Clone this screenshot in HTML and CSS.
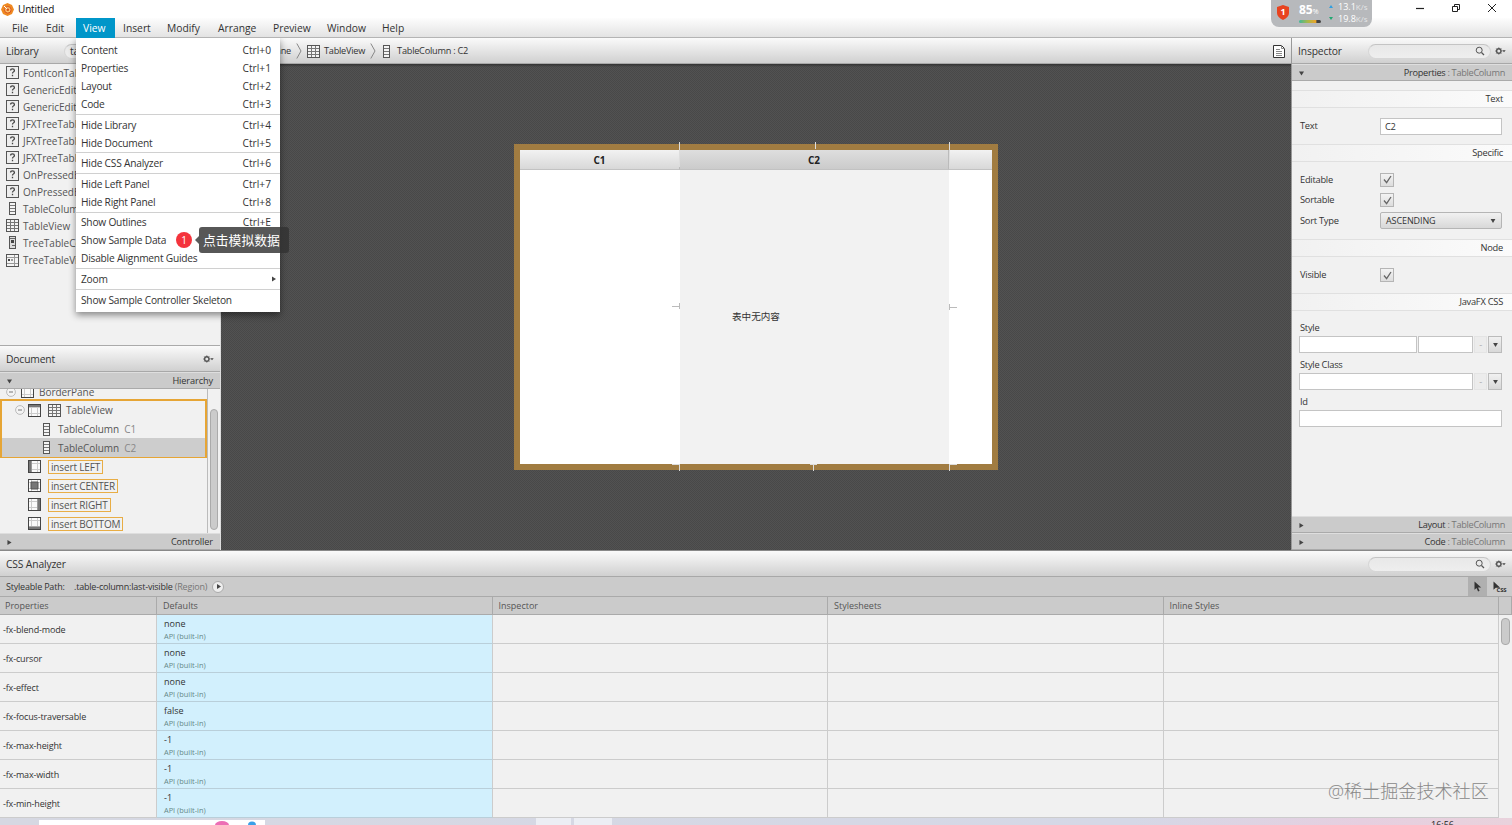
FILE: index.html
```
<!DOCTYPE html>
<html lang="en">
<head>
    <meta charset="UTF-8">
    <meta name="viewport" content="width=device-width, initial-scale=1.0">
    <title>Untitled</title>
    <link rel="stylesheet" href="styles.css">
</head>
<body>

    <!-- Icon set -->
    <svg class="sprite" width="0" height="0">
        <symbol id="i-unknown" viewBox="0 0 13 13"><rect x=".5" y=".5" width="12" height="12" fill="#eee" stroke="#555"/><path d="M4.6 4.6q0-1.7 1.9-1.7t1.9 1.6q0 1-1 1.5t-.9 1.5M6.5 8.8v1.4" fill="none" stroke="#444" stroke-width="1.3"/></symbol>
        <symbol id="i-table" viewBox="0 0 13 13"><rect x=".5" y=".5" width="12" height="12" fill="#f4f4f4" stroke="#555"/><path d="M1 3.5h11M1 6.5h11M1 9.5h11M4.5 1v11M8.5 1v11" stroke="#777" fill="none"/></symbol>
        <symbol id="i-treetable" viewBox="0 0 13 13"><rect x=".5" y=".5" width="12" height="12" fill="#f4f4f4" stroke="#555"/><path d="M1 3.5h11M8.5 1v11M1 9.5h11" stroke="#999" fill="none"/><path d="M2 5h2v2H2zM5 5.500h2v1H5z" fill="#444"/></symbol>
        <symbol id="i-column" viewBox="0 0 13 13"><rect x="3.5" y=".5" width="6" height="12" fill="#f4f4f4" stroke="#555"/><path d="M4 3.5h5M4 6.5h5M4 9.5h5" stroke="#777" fill="none"/></symbol>
        <symbol id="i-treecolumn" viewBox="0 0 13 13"><rect x="3.5" y=".5" width="6" height="12" fill="#ddd" stroke="#555"/><path d="M4 2.5h5M6 9.5h3" stroke="#666"/><path d="M5 4h3v3H5z" fill="#444"/></symbol>
        <symbol id="i-pane" viewBox="0 0 13 13"><rect x=".5" y=".5" width="12" height="12" fill="#fafafa" stroke="#444"/><path d="M3.5 1v11M9.5 1v11M1 3.5h11M1 9.5h11" stroke="#ccc"/></symbol>
        <symbol id="i-top" viewBox="0 0 13 13"><use href="#i-pane"/><path d="M1 1h11v2H1z" fill="#777"/></symbol>
        <symbol id="i-left" viewBox="0 0 13 13"><use href="#i-pane"/><path d="M1 1h2.6v11H1z" fill="#777"/></symbol>
        <symbol id="i-center" viewBox="0 0 13 13"><use href="#i-pane"/><path d="M3 3h7v7H3z" fill="#777" stroke="#555"/></symbol>
        <symbol id="i-right" viewBox="0 0 13 13"><use href="#i-pane"/><path d="M9.4 1H12v11H9.4z" fill="#777"/></symbol>
        <symbol id="i-bottom" viewBox="0 0 13 13"><use href="#i-pane"/><path d="M1 9.6h11V12H1z" fill="#777"/></symbol>
        <symbol id="i-search" viewBox="0 0 10 10"><circle cx="4.2" cy="4.2" r="3" fill="none" stroke="#555"/><path d="M6.5 6.5 9 9" stroke="#555" stroke-width="1.3"/></symbol>
        <symbol id="i-gear" viewBox="0 0 11 8"><circle cx="3.8" cy="4" r="2.2" fill="none" stroke="#555" stroke-width="1.4"/><path d="M3.8.5v1M3.8 6.5v1M.3 4h1M6.3 4h1M1.4 1.6l.7.7M5.5 5.7l.7.7M6.2 1.6l-.7.7M2.1 5.7l-.7.7" stroke="#555"/><path d="M7.3 3.2h3.4L9 5.2z" fill="#444"/></symbol>
        <symbol id="i-down" viewBox="0 0 6 5"><path d="M0 0h6L3 5z" fill="#444"/></symbol>
        <symbol id="i-play" viewBox="0 0 5 6"><path d="M0 0v6l5-3z" fill="#444"/></symbol>
        <symbol id="i-minus" viewBox="0 0 10 10"><circle cx="5" cy="5" r="4.4" fill="#f4f4f4" stroke="#bbb"/><path d="M3 5h4" stroke="#777"/></symbol>
        <symbol id="i-check" viewBox="0 0 9 9"><path d="M1 4.5 3.6 7.6 8 1" fill="none" stroke="#666" stroke-width="1.3"/></symbol>
        <symbol id="i-chevron" viewBox="0 0 6 16"><path d="M.8.5 5 8 .8 15.5" fill="none" stroke="#888"/></symbol>
    </svg>

    <!-- Window title -->
    <header class="titlebar">
        <svg class="logo" viewBox="0 0 13 13"><path d="M6.5 0 11 2l2 4.500L11 11l-4.500 2L2 11 0 6.500 2 2z" fill="#ef8a22"/><circle cx="6.800" cy="6.800" r="3.300" fill="#f9c06a" stroke="#d9531e"/><path d="M3 3l4 4" stroke="#fff"/><circle cx="6.800" cy="6.800" r="1.300" fill="#d9531e"/></svg>
        <span>Untitled</span>
        <div class="window-buttons">
            <svg width="10" height="10" viewBox="0 0 10 10"><path d="M1 5.500h8" stroke="#222" stroke-width="1.200"/></svg>
            <svg width="10" height="10" viewBox="0 0 10 10"><path d="M1.500 3.500h5v5h-5zM3.500 3V1.500h5v5H7" fill="none" stroke="#222"/></svg>
            <svg width="10" height="10" viewBox="0 0 10 10"><path d="M1 1l8 8M9 1 1 9" stroke="#222"/></svg>
        </div>
    </header>

    <!-- Network speed widget -->
    <div class="speed">
        <svg class="shield" viewBox="0 0 12 15"><path d="M6 0 12 2v6q0 4-6 7Q0 12 0 8V2z" fill="#e8431f"/></svg>
        <b class="shield-num">1</b>
        <div class="load"><div><b>85</b><small>%</small></div><i></i></div>
        <div class="rates">
            <div><em class="up"></em>13.1<small>K/s</small></div>
            <div><em class="dn"></em>19.8<small>K/s</small></div>
        </div>
    </div>

    <nav class="menubar">
        <span class="m-file">File</span><span class="m-edit">Edit</span><span class="m-view">View</span><span class="m-insert">Insert</span><span class="m-modify">Modify</span><span class="m-arrange">Arrange</span><span class="m-preview">Preview</span><span class="m-window">Window</span><span>Help</span>
    </nav>

    <main class="workspace">
        <!-- Left panel -->
        <aside class="left">
            <div class="bar"><span>Library</span><span class="search lib-search">ta</span></div>
            <ul class="library">
                <li><svg><use href="#i-unknown"/></svg>FontIconTableCell</li>
                <li><svg><use href="#i-unknown"/></svg>GenericEditable</li>
                <li><svg><use href="#i-unknown"/></svg>GenericEditable</li>
                <li><svg><use href="#i-unknown"/></svg>JFXTreeTableCell</li>
                <li><svg><use href="#i-unknown"/></svg>JFXTreeTableRow</li>
                <li><svg><use href="#i-unknown"/></svg>JFXTreeTableView</li>
                <li><svg><use href="#i-unknown"/></svg>OnPressedEditable</li>
                <li><svg><use href="#i-unknown"/></svg>OnPressedEditable</li>
                <li><svg><use href="#i-column"/></svg>TableColumn</li>
                <li><svg><use href="#i-table"/></svg>TableView</li>
                <li><svg><use href="#i-treecolumn"/></svg>TreeTableColumn</li>
                <li><svg><use href="#i-treetable"/></svg>TreeTableView</li>
            </ul>
            <div class="bar doc-bar"><span>Document</span><svg class="gear"><use href="#i-gear"/></svg></div>
            <div class="section"><svg class="tri-d"><use href="#i-down"/></svg><span>Hierarchy</span></div>
            <div class="tree-wrap">
                <div class="tree">
                    <div class="row root"><svg class="exp"><use href="#i-minus"/></svg><svg><use href="#i-pane"/></svg><span>BorderPane</span></div>
                    <div class="group">
                        <div class="row view"><svg class="exp"><use href="#i-minus"/></svg><svg><use href="#i-top"/></svg><svg><use href="#i-table"/></svg><span>TableView</span></div>
                        <div class="row col"><svg><use href="#i-column"/></svg><span>TableColumn</span><i>C1</i></div>
                        <div class="row col selected"><svg><use href="#i-column"/></svg><span>TableColumn</span><i>C2</i></div>
                    </div>
                    <div class="row insert"><svg><use href="#i-left"/></svg><span>insert LEFT</span></div>
                    <div class="row insert"><svg><use href="#i-center"/></svg><span>insert CENTER</span></div>
                    <div class="row insert"><svg><use href="#i-right"/></svg><span>insert RIGHT</span></div>
                    <div class="row insert"><svg><use href="#i-bottom"/></svg><span>insert BOTTOM</span></div>
                </div>
                <div class="track"><div class="thumb"></div></div>
            </div>
            <div class="section"><svg class="tri-r"><use href="#i-play"/></svg><span>Controller</span></div>
        </aside>

        <!-- Canvas -->
        <section class="center">
            <div class="bar crumbs">
                <span class="c-pane">BorderPane</span><svg class="chev"><use href="#i-chevron"/></svg>
                <svg class="ic"><use href="#i-table"/></svg><span class="c-view">TableView</span><svg class="chev"><use href="#i-chevron"/></svg>
                <svg class="ic ic-col"><use href="#i-column"/></svg><span class="c-col">TableColumn : C2</span>
                <svg class="page" viewBox="0 0 12 13"><path d="M.5.5h8l3 3v9H.5z" fill="#fff" stroke="#333"/><path d="M8.500.500v3h3M3 4.500h4M3 6.500h6M3 8.500h6M3 10.500h6" fill="none" stroke="#888"/></svg>
            </div>
            <div class="canvas">
                <div class="preview">
                    <div class="th">C1</div>
                    <div class="th th2">C2</div>
                    <div class="th"></div>
                    <div class="td"></div>
                    <div class="td td2"></div>
                    <div class="td"></div>
                    <span class="empty">表中无内容</span>
                    <svg class="handles" viewBox="0 0 484 330"><path d="M165.500 1v25M301.500 1v7M435.500 1v25" stroke="#ddd"/><path d="M165.500 323v7M299.500 323v7M435.500 323v7M158 323.500h8M296 323.500h7M435 323.500h8" stroke="#ddd"/><path d="M158 165.500h7M165.500 162v6M436 166.500h7M435.500 163v6" stroke="#bbb"/></svg>
                </div>
            </div>
        </section>

        <!-- Inspector -->
        <aside class="right">
            <div class="bar"><span>Inspector</span><span class="search"><svg><use href="#i-search"/></svg></span><svg class="gear"><use href="#i-gear"/></svg></div>
            <div class="section"><svg class="tri-d"><use href="#i-down"/></svg><span>Properties <i>: TableColumn</i></span></div>
            <div class="props">
                <div class="heading first">Text</div>
                <div class="prop p-text"><label>Text</label><div class="field">C2</div></div>
                <div class="heading h-specific">Specific</div>
                <div class="prop p-edit"><label>Editable</label><div class="check"><svg><use href="#i-check"/></svg></div></div>
                <div class="prop p-sort"><label>Sortable</label><div class="check"><svg><use href="#i-check"/></svg></div></div>
                <div class="prop p-type"><label>Sort Type</label><div class="combo">ASCENDING<svg><use href="#i-down"/></svg></div></div>
                <div class="heading h-node">Node</div>
                <div class="prop p-visible"><label>Visible</label><div class="check"><svg><use href="#i-check"/></svg></div></div>
                <div class="heading h-css">JavaFX CSS</div>
                <div class="stack"><label>Style</label><div class="line"><div class="field key"></div><div class="field"></div><div class="mini off">-</div><div class="mini"><svg><use href="#i-down"/></svg></div></div></div>
                <div class="stack"><label>Style Class</label><div class="line"><div class="field"></div><div class="mini off">-</div><div class="mini"><svg><use href="#i-down"/></svg></div></div></div>
                <div class="stack"><label>Id</label><div class="line"><div class="field"></div></div></div>
            </div>
            <div class="section"><svg class="tri-r"><use href="#i-play"/></svg><span>Layout <i>: TableColumn</i></span></div>
            <div class="section"><svg class="tri-r"><use href="#i-play"/></svg><span>Code <i>: TableColumn</i></span></div>
        </aside>
    </main>

    <!-- CSS Analyzer -->
    <section class="analyzer">
        <div class="bar"><span>CSS Analyzer</span><span class="search"><svg><use href="#i-search"/></svg></span><svg class="gear"><use href="#i-gear"/></svg></div>
        <div class="path">
            <span class="path-label">Styleable Path:</span><span>.table-column:last-visible <i>(Region)</i></span>
            <div class="go"><svg><use href="#i-play"/></svg></div>
            <div class="tool on"><svg viewBox="0 0 8 11"><path d="M.5.5v8.200l2-1.700 1.600 3.500 1.500-.700L4 6.500h3.200z" fill="#333"/></svg></div>
            <div class="tool pick"><svg viewBox="0 0 8 11"><path d="M.5.5v8.200l2.200-2h4.500z" fill="#333"/></svg><b>CSS</b></div>
        </div>
        <div class="grid head"><div>Properties</div><div>Defaults</div><div>Inspector</div><div>Stylesheets</div><div>Inline Styles</div><div></div></div>
        <div class="rows">
            <div class="body">
                <div class="grid"><div>-fx-blend-mode</div><div class="def">none<small>API (built-in)</small></div><div></div><div></div><div></div></div>
                <div class="grid"><div>-fx-cursor</div><div class="def">none<small>API (built-in)</small></div><div></div><div></div><div></div></div>
                <div class="grid"><div>-fx-effect</div><div class="def">none<small>API (built-in)</small></div><div></div><div></div><div></div></div>
                <div class="grid"><div>-fx-focus-traversable</div><div class="def">false<small>API (built-in)</small></div><div></div><div></div><div></div></div>
                <div class="grid"><div>-fx-max-height</div><div class="def">-1<small>API (built-in)</small></div><div></div><div></div><div></div></div>
                <div class="grid"><div>-fx-max-width</div><div class="def">-1<small>API (built-in)</small></div><div></div><div></div><div></div></div>
                <div class="grid"><div>-fx-min-height</div><div class="def">-1<small>API (built-in)</small></div><div></div><div></div><div></div></div>
            </div>
            <div class="scroll"><div class="knob"></div></div>
        </div>
    </section>

    <!-- Desktop taskbar -->
    <footer class="taskbar">
        <div class="task-search"><svg viewBox="0 0 50 5"><ellipse cx="9" cy="5" rx="7" ry="4" fill="#ec6fb5"/><ellipse cx="39" cy="5" rx="4" ry="3.500" fill="#3aa0e8"/></svg></div>
        <div class="task-app"></div><div class="task-app second"></div>
        <span class="clock">16:56</span>
    </footer>

    <!-- View menu -->
    <div class="menu">
        <div><span>Content</span><kbd>Ctrl+0</kbd></div>
        <div><span>Properties</span><kbd>Ctrl+1</kbd></div>
        <div><span>Layout</span><kbd>Ctrl+2</kbd></div>
        <div><span>Code</span><kbd>Ctrl+3</kbd></div>
        <hr>
        <div><span>Hide Library</span><kbd>Ctrl+4</kbd></div>
        <div><span>Hide Document</span><kbd>Ctrl+5</kbd></div>
        <hr>
        <div><span>Hide CSS Analyzer</span><kbd>Ctrl+6</kbd></div>
        <hr>
        <div><span>Hide Left Panel</span><kbd>Ctrl+7</kbd></div>
        <div><span>Hide Right Panel</span><kbd>Ctrl+8</kbd></div>
        <hr>
        <div><span>Show Outlines</span><kbd>Ctrl+E</kbd></div>
        <div><span>Show Sample Data</span></div>
        <div><span>Disable Alignment Guides</span></div>
        <hr>
        <div><span>Zoom</span><svg class="sub"><use href="#i-play"/></svg></div>
        <hr>
        <div><span>Show Sample Controller Skeleton</span></div>
    </div>

    <div class="step">1</div>
    <div class="tip">点击模拟数据</div>
    <div class="watermark">@稀土掘金技术社区</div>

</body>
</html>
```
FILE: styles.css
```
* { box-sizing: border-box; }
body { margin: 0; width: 1512px; height: 825px; overflow: hidden; display: flex; flex-direction: column; position: relative; background: #f1f1f1; color: #333; font: 10px/14px "Open Sans", "Noto Sans", "Noto Sans CJK SC", sans-serif; white-space: nowrap; }
svg { display: block; flex: none; }
i { font-style: normal; color: #777; }
.sprite { position: absolute; }

.titlebar { height: 18px; flex: none; background: #fff; display: flex; align-items: center; padding-left: 1px; color: #111; letter-spacing: -.15px; }
.logo { width: 13px; height: 13px; margin-right: 4px; }
.window-buttons { display: flex; gap: 26px; margin: -3px 15px 0 auto; }
.menubar { height: 20px; flex: none; display: flex; align-items: center; background: linear-gradient(#fdfdfd, #e3e3e3); border-bottom: 1px solid #b4b4b4; line-height: 20px; font-size: 10.3px; }
.m-file { width: 46px; padding-left: 12px; }
.m-edit { width: 30px; }
.m-view { width: 39px; padding-left: 7px; background: #0096c9; color: #fff; }
.m-insert { width: 52px; padding-left: 8px; }
.m-modify { width: 51px; }
.m-arrange { width: 55px; }
.m-preview { width: 54px; }
.m-window { width: 55px; }

.speed { position: absolute; left: 1271px; top: 0; width: 101px; height: 27px; background: #b7b9bc; border-radius: 0 0 8px 8px; color: #fff; display: flex; }
.shield { width: 12px; height: 15px; margin: 5px 0 0 6px; }
.shield-num { width: 12px; margin: 5px 0 0 -12px; text-align: center; font-size: 9px; }
.load { width: 22px; margin: 3px 0 0 10px; font-size: 12px; }
.load small { font-size: 7px; }
.load i { display: block; width: 22px; height: 3px; margin-top: 1px; border-radius: 2px; background: linear-gradient(90deg, #3fb89a, #a8b84a 40%, #eaa52c 75%, #444 82%); }
.rates { margin: 1px 0 0 8px; font-size: 9px; line-height: 12px; }
.rates small { font-size: 8px; color: #e4e5e6; }
.rates em { display: inline-block; margin-right: 5px; vertical-align: 2px; border: 2px solid transparent; }
.rates .up { border-top: 0; border-bottom: 3px solid #2f9fe0; }
.rates .dn { border-bottom: 0; border-top: 3px solid #1fa870; }

.workspace { height: 512px; flex: none; display: flex; }
.bar { height: 26px; flex: none; display: flex; align-items: center; padding: 1px 6px 0; background: linear-gradient(#fafafa, #d0d0d0); border-bottom: 1px solid #a8a8a8; font-size: 10.3px; letter-spacing: -.15px; }
.search { width: 123px; height: 15px; margin: 0 4px 0 auto; padding-right: 5px; border: 1px solid #d6d6d6; border-top-color: #c4c4c4; border-radius: 8px; background: linear-gradient(#e8e8e8, #eee); display: flex; align-items: center; justify-content: flex-end; }
.search svg { width: 10px; height: 10px; }
.gear { width: 11px; height: 8px; }
.section { height: 17px; flex: none; display: flex; align-items: center; justify-content: space-between; padding: 1px 7px 0; background: #cbcbcb; border-top: 1px solid #dedede; border-bottom: 1px solid #aaa; font-size: 9.2px; letter-spacing: -.1px; }
.tri-d { width: 5px; height: 5px; }
.tri-r { width: 5px; height: 5px; }

.left { width: 221px; flex: none; display: flex; flex-direction: column; border-right: 1px solid #ddd; }
.lib-search { width: 142px; margin: 0 8px 0 0; padding-left: 5px; justify-content: flex-start; }
.left .bar { justify-content: space-between; }
.library { height: 282px; margin: 0; padding: 0 0 0 6px; list-style: none; border-bottom: 1px solid #aaa; }
.library li { height: 17.05px; display: flex; align-items: center; gap: 4px; color: #555; }
.library svg, .row svg { width: 13px; height: 13px; }
.tree-wrap { height: 144px; display: flex; overflow: hidden; }
.tree { width: 208px; margin-top: -7px; border-right: 1px solid #bbb; }
.row { height: 19px; display: flex; align-items: center; color: #555; font-size: 10px; letter-spacing: -.05px; }
.row .exp { width: 10px; height: 10px; }
.root { padding-left: 6px; }
.root .exp { margin-right: 5px; }
.root span { margin-left: 5px; }
.group { border: 2px solid #e6a535; height: 59px; margin: -2px 0 -1px; }
.group .row { height: 18.7px; }
.view { padding-left: 13px; }
.view .exp { margin-right: 3px; }
.view svg + svg + svg { margin: 0 5px 0 7px; }
.col { padding-left: 38px; }
.col span { margin-left: 5px; }
.col i { margin-left: 5px; color: #888; }
.selected { background: #cdcdcd; }
.insert { padding-left: 28px; }
.insert span { margin-left: 7px; padding: 0 2px; line-height: 12px; border: 1px solid #e8ad45; letter-spacing: -.15px; }
.track { flex: 1; padding: 20px 2px 3px; }
.thumb { width: 8px; height: 121px; border: 1px solid #aaa; border-radius: 4px; background: #cbcbcb; }

.center { flex: 1; display: flex; flex-direction: column; }
.crumbs { padding: 1px 6px 0; font-size: 9.2px; letter-spacing: -.25px; }
.c-pane { width: 64px; text-align: right; }
.chev { width: 6px; height: 16px; margin: 0 5px 0 5px; }
.ic { width: 13px; height: 13px; }
.c-view { margin: 0 0 0 4px; }
.ic-col { margin-left: -1px; }
.c-col { margin-left: 4px; }
.page { width: 12px; height: 13px; margin-left: auto; }
.canvas { flex: 1; padding: 80px 0 0 293px; background: linear-gradient(#333, rgba(51, 51, 51, 0)) 0 0 / 100% 3px no-repeat, conic-gradient(#484848 25%, #525252 0 50%, #484848 0 75%, #525252 0) 0 0 / 2px 2px; }
.preview { position: relative; width: 484px; height: 326px; border: 6px solid #a17c41; display: grid; grid-template: 20px 1fr / 160px 269px 1fr; }
.th { background: linear-gradient(#f2f2f2, #d8d8d8); border-right: 1px solid #bbb; border-bottom: 1px solid #c2c2c2; text-align: center; font-weight: bold; line-height: 20px; color: #222; }
.th:nth-child(3) { border-right: 0; }
.th2 { background: linear-gradient(#dedede, #cbcbcb); }
.td { background: #fff; }
.td2 { background: #f2f2f2; }
.empty { position: absolute; left: 212px; top: 160px; font-size: 9.6px; }
.handles { position: absolute; left: -6px; top: -9px; width: 484px; height: 330px; overflow: visible; }

.right { width: 221px; flex: none; display: flex; flex-direction: column; border-left: 1px solid #999; }
.right .section { letter-spacing: -.3px; }
.props { flex: 1; padding-top: 9px; font-size: 9.3px; letter-spacing: -.25px; }
.heading { height: 18px; padding-right: 9px; text-align: right; line-height: 16px; border: 1px solid #e0e0e0; border-width: 1px 0; background: linear-gradient(90deg, #f1f1f1, #fbfbfb); }
.prop { display: flex; align-items: center; padding: 0 10px 0 8px; }
.prop label { width: 80px; }
.field { flex: 1; height: 17px; padding-left: 4px; border: 1px solid #c4c4c4; background: #fff; line-height: 15px; }
.p-text { height: 36px; }
.p-edit { height: 21px; }
.p-sort { height: 20px; }
.p-type { height: 21px; }
.p-visible { height: 36px; }
.h-specific { margin-bottom: 7px; }
.h-node { margin-top: 8px; }
.check { width: 14px; height: 14px; border: 1px solid #b5b5b5; background: linear-gradient(#f3f3f3, #ddd); display: grid; place-items: center; }
.check svg { width: 9px; height: 9px; }
.combo { flex: 1; height: 17px; padding: 0 5px; border: 1px solid #b5b5b5; border-radius: 2px; background: linear-gradient(#f1f1f1, #d8d8d8); display: flex; align-items: center; justify-content: space-between; font-size: 9px; letter-spacing: -.1px; }
.combo svg { width: 6px; height: 4px; }
.h-css { margin-bottom: 10px; }
.stack { height: 37px; padding: 0 10px 0 7px; }
.stack label { display: block; padding-left: 1px; height: 15px; line-height: 14px; }
.line { display: flex; gap: 1px; }
.line .key { flex: none; width: 118px; }
.mini { width: 14px; height: 17px; border: 1px solid #bbb; background: linear-gradient(#f1f1f1, #d8d8d8); display: grid; place-items: center; }
.mini.off { width: 13px; border-color: #e4e4e4; background: #ececec; color: #aaa; line-height: 14px; }
.mini svg { width: 5px; height: 4px; }

.analyzer { height: 268px; flex: none; display: flex; flex-direction: column; border-top: 1px solid #888; font-size: 9px; letter-spacing: -.15px; }
.path { height: 20px; flex: none; display: flex; align-items: center; padding-left: 6px; background: #cbcbcb; border-bottom: 1px solid #aaa; letter-spacing: -.2px; }
.path-label { width: 68px; }
.go { width: 12px; height: 12px; margin-left: 5px; border: 1px solid #aaa; border-radius: 50%; background: #eee; display: grid; place-items: center; }
.go svg { width: 4px; height: 5px; margin-left: 1px; }
.tool { width: 19px; height: 19px; display: grid; place-items: center; }
.tool svg { width: 8px; height: 11px; }
.tool.on { margin-left: auto; background: #b0b0b0; }
.tool.pick { width: 25px; display: flex; justify-content: center; }
.pick b { margin: 7px 0 0 -4px; font-size: 6px; }
.grid { display: grid; grid-template-columns: 157px 335.5px 335.5px 335.5px 335.5px 1fr; height: 29px; }
.grid > div { height: 29px; border-right: 1px solid #ccc; border-bottom: 1px solid #ccc; padding-left: 6px; line-height: 29px; }
.grid > div:first-child { padding-left: 3px; }
.head { height: 18px; flex: none; background: #cbcbcb; color: #555; letter-spacing: 0; }
.grid.head > div { height: 18px; line-height: 17px; border-color: #aaa; }
.head > div:first-child { padding-left: 5px; }
.grid > .def { background: #d2f0fd; border-bottom-color: #b9cfda; line-height: 12px; padding: 3px 0 0 7px; letter-spacing: 0; }
.def small { display: block; color: #688; font-size: 7.4px; line-height: 12px; }
.rows { flex: 1; display: flex; }
.body { width: 1499px; }
.scroll { flex: 1; padding: 3px 2px; }
.knob { width: 9px; height: 27px; border: 1px solid #aaa; border-radius: 4px; background: #cbcbcb; }

.taskbar { height: 7px; flex: none; display: flex; overflow: hidden; background: linear-gradient(90deg, #d6d8e2, #d5d8e6 75%, #e6cfe0 90%, #e9d2dc); }
.task-search { width: 226px; height: 7px; margin: 2px 0 0 39px; background: #fff; padding-left: 174px; }
.task-search svg { width: 50px; height: 5px; }
.task-app { width: 35px; margin-left: 271px; background: #eceef4; }
.second { width: 38px; margin-left: 3px; }
.clock { margin: 2px 58px 0 auto; color: #222; font-size: 9px; line-height: 10px; }

.menu { position: absolute; left: 76px; top: 38px; width: 204px; height: 274px; padding-top: 3px; background: #fff; box-shadow: 0 3px 7px rgba(0, 0, 0, .45); font-size: 10.2px; clip-path: inset(0 -12px -12px -12px); }
.menu div { height: 18px; padding: 0 9px 0 5px; display: flex; align-items: center; justify-content: space-between; }
.menu span { letter-spacing: -.22px; }
.menu kbd { font: inherit; }
.menu hr { height: 1px; margin: .8px 0; border: 0; background: #d0d0d0; }
.menu .sub { width: 4px; height: 6px; margin-right: -5px; }
.step { position: absolute; left: 176px; top: 232px; width: 16px; height: 16px; border-radius: 50%; background: #f4333c; color: #fff; text-align: center; line-height: 16px; }
.tip { position: absolute; left: 199px; top: 227px; width: 90px; height: 26px; padding-left: 4px; border-radius: 3px; background: rgba(50, 50, 50, .82); color: #fff; font-size: 12.8px; line-height: 26px; }
.tip::before { content: ""; position: absolute; left: -4px; top: 9px; border: 4px solid transparent; border-left: 0; border-right-color: #5b5b5b; }
.watermark { position: absolute; left: 1328px; top: 779px; font-size: 18.1px; line-height: 24px; color: #888; font-weight: 300; }
```
